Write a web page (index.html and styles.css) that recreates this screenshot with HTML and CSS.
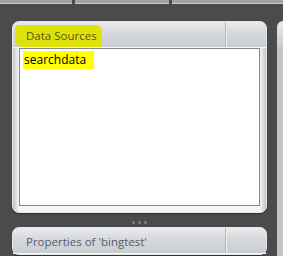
FILE: index.html
```html
<!DOCTYPE html>
<html lang="en">
<head>
  <meta charset="UTF-8">
  <title>Data Sources</title>
  <link rel="stylesheet" href="styles.css">
</head>
<body>

<div class="tabs">
  <div class="tab tab-one"></div>
  <div class="tab tab-two"></div>
  <div class="tab tab-three"></div>
</div>

<div class="workspace">
  <div class="column">
    <div class="panel">
      <div class="panel-header">
        <div class="panel-title"><span class="marker">Data Sources</span></div>
        <div class="panel-tools"></div>
      </div>
      <div class="panel-body">
        <div class="list-box">
          <div class="list-item"><span class="hilite">searchdata</span></div>
        </div>
      </div>
    </div>

    <div class="grip">
      <span></span><span></span><span></span>
    </div>

    <div class="panel">
      <div class="panel-header">
        <div class="panel-title">Properties of 'bingtest'</div>
        <div class="panel-tools"></div>
      </div>
    </div>
  </div>

  <div class="side-panel"></div>
</div>

</body>
</html>
```

FILE: styles.css
```css
* {
  box-sizing: border-box;
}

body {
  margin: 0;
  width: 283px;
  height: 256px;
  overflow: hidden;
  background: #4b4b4b;
  font-family: 'Open Sans', 'DejaVu Sans', sans-serif;
  font-size: 11.5px;
}

.tabs {
  display: flex;
  gap: 3px;
  height: 4px;
}

.tab {
  background: #a3a3a3;
  border-bottom: 1px solid #c9c9c9;
}

.tab-one {
  width: 72px;
}

.tab-two {
  width: 94px;
}

.tab-three {
  flex: 1;
}

.workspace {
  display: flex;
  padding: 17px 0 0 12px;
}

.column {
  width: 255px;
  display: flex;
  flex-direction: column;
}

.panel {
  border: 1px solid #e4e6e8;
  border-radius: 7px;
  background: linear-gradient(to right, #c2c6ca, #f4f5f6 6px, #f4f5f6 calc(100% - 6px), #c2c6ca);
  box-shadow: 0 1px 1px rgba(0, 0, 0, 0.35);
}

.panel-header {
  display: flex;
  height: 26px;
  border-radius: 6px 6px 0 0;
  background: linear-gradient(#e9ebed, #d6d9dc 45%, #c9ccd0);
  border-bottom: 1px solid #f8f8f8;
}

.panel-title {
  width: 213px;
  padding: 6px 0 0 13px;
  color: #555a6e;
  border-right: 1px solid #b3b7bb;
}

.panel-tools {
  flex: 1;
  border-left: 1px solid #eef0f1;
}

.marker {
  display: inline-block;
  margin: -4px 0 0 -11px;
  padding: 3px 5px 4px 11px;
  background: #dfe20a;
  color: #545618;
  border-radius: 4px 6px 3px 8px;
}

.panel-body {
  padding: 0 6px 6px 6px;
}

.list-box {
  height: 158px;
  background: #fff;
  border: 1px solid #85888c;
  padding: 2px 0 0 3px;
}

.hilite {
  display: inline-block;
  background: #ffff00;
  color: #000;
  padding: 0 8px 1px 1px;
  font-size: 12px;
}

.grip {
  display: flex;
  justify-content: center;
  gap: 3px;
  height: 14px;
  padding-top: 8px;
}

.grip span {
  width: 3px;
  height: 3px;
  background: #747474;
}

.side-panel {
  margin-left: 10px;
  flex: 1;
  height: 240px;
  border-radius: 7px 0 0 0;
  background: linear-gradient(#e9ebed, #c9ccd0 26px, #c2c6ca 27px);
}
```
